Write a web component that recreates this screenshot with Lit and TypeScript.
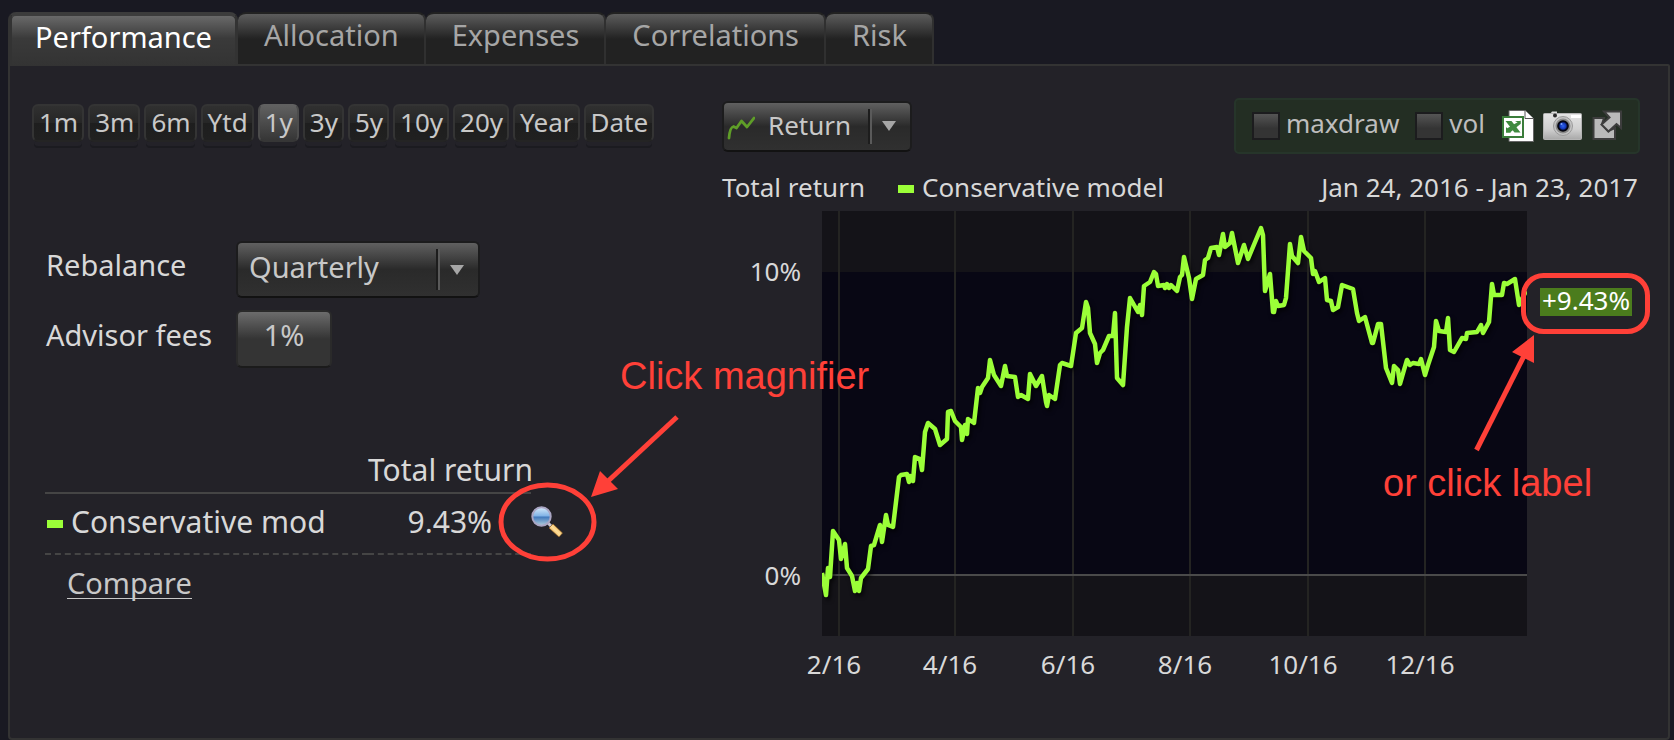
import { LitElement, html, svg, css } from "lit";
import { customElement, state, property } from "lit/decorators.js";
import { classMap } from "lit/directives/class-map.js";

const TABS = ["Performance", "Allocation", "Expenses", "Correlations", "Risk"];
const RANGES = ["1m", "3m", "6m", "Ytd", "1y", "3y", "5y", "10y", "20y", "Year", "Date"];

const TICKS = [
  { x: 117, label: "2/16" },
  { x: 233, label: "4/16" },
  { x: 351, label: "6/16" },
  { x: 468, label: "8/16" },
  { x: 586, label: "10/16" },
  { x: 703, label: "12/16" },
];

// Daily total return of the model, in chart units.
const SERIES =
  "822,573 826,595 828,568 830,577 833,531 839,540 841,559 845,544 847,568 852,576 855,591 857,583 859,591 861,578 868,569 " +
  "871,546 874,545 880,525 882,542 886,515 888,525 893,527 899,477 901,475 907,474 909,482 910,476 913,481 915,457 920,459 " +
  "922,470 925,432 928,423 935,429 940,445 947,439 948,412 951,411 955,421 961,427 962,440 965,425 967,434 968,419 974,423 " +
  "978,388 980,393 982,387 988,378 990,360 994,375 1001,386 1005,366 1007,376 1015,377 1018,397 1021,395 1028,399 1030,374 " +
  "1036,386 1042,376 1046,402 1047,406 1049,395 1055,399 1060,365 1062,363 1071,366 1073,353 1076,333 1082,328 1086,302 " +
  "1088,308 1090,333 1095,344 1097,363 1100,353 1103,350 1109,336 1113,336 1115,313 1117,378 1123,385 1127,327 1130,298 " +
  "1138,312 1140,305 1142,315 1144,286 1150,282 1154,272 1156,274 1158,286 1164,285 1165,288 1167,284 1169,288 1171,285 " +
  "1177,291 1180,277 1182,275 1184,257 1189,278 1192,299 1196,279 1203,275 1205,260 1208,258 1211,248 1217,247 1219,255 " +
  "1223,234 1225,247 1230,243 1232,233 1238,263 1244,245 1248,259 1253,247 1261,228 1263,235 1265,291 1270,274 1273,312 " +
  "1274,312 1276,301 1278,306 1284,305 1286,298 1290,244 1292,256 1298,263 1301,237 1304,251 1311,258 1313,274 1315,271 " +
  "1319,282 1325,278 1327,300 1331,301 1333,310 1338,307 1342,285 1353,289 1357,313 1359,321 1365,317 1372,343 1373,343 " +
  "1378,324 1381,324 1386,368 1392,383 1394,366 1398,370 1400,384 1404,370 1407,360 1410,365 1413,363 1419,364 1421,359 " +
  "1425,375 1428,365 1434,347 1436,321 1439,331 1446,332 1448,318 1450,350 1454,352 1462,338 1466,339 1467,333 1477,332 " +
  "1481,325 1483,333 1489,322 1492,284 1494,295 1502,295 1504,283 1507,284 1515,279 1519,305 1523,297 1526,291";

const trendIcon = svg`<svg class="trend" viewBox="0 0 28 24" width="28" height="24" aria-hidden="true">
  <path d="M2 22 C2.500 16 4 11 6.500 10.500 L9.500 12 L14.500 5 L20 11 L27 2" fill="none" stroke="#5f9e28" stroke-width="2.800" stroke-linecap="round" stroke-linejoin="round"/>
</svg>`;

const excelIcon = svg`<svg viewBox="0 0 32 32" width="32" height="32" aria-hidden="true">
  <path d="M7 0.500H23L31.500 9V31.500H7Z" fill="#fff" stroke="#666"/>
  <path d="M23 0.500V8.500H31.500" fill="#fff" stroke="#555"/>
  <rect x="1" y="7" width="20" height="20" fill="#fff" stroke="#3b7d3b" stroke-width="2"/>
  <path d="M3.500 11H9.500L18.500 22.500H12.500Z" fill="#3f8a3f"/>
  <path d="M18.500 10.500V14L8 22.500H4V19Z" fill="#3f8a3f"/>
  <path d="M13 11H18.500V14ZM4 17V22.500H9Z" fill="#3f8a3f"/>
</svg>`;

const cameraIcon = svg`<svg viewBox="0 0 39 30" width="39" height="30" aria-hidden="true">
  <defs>
    <linearGradient id="cam" x1="0" y1="0" x2="0" y2="1">
      <stop offset="0" stop-color="#e4e4e4"/><stop offset=".6" stop-color="#d0d0d0"/><stop offset="1" stop-color="#a8a8a8"/>
    </linearGradient>
    <radialGradient id="lens"><stop offset="0" stop-color="#2f66f0"/><stop offset=".5" stop-color="#1538b8"/><stop offset=".75" stop-color="#05081c"/><stop offset="1" stop-color="#000"/></radialGradient>
  </defs>
  <path d="M7 3L9 0.500H14V3Z" fill="#ddd"/>
  <rect x="0.500" y="2.500" width="38" height="26" rx="1" fill="url(#cam)" stroke="#b4b4b4"/>
  <circle cx="12" cy="4.500" r="2" fill="#2a2a2a"/>
  <rect x="28" y="4" width="10" height="3" fill="#fff"/>
  <circle cx="20" cy="15" r="9.500" fill="#c4c4c4" stroke="#9a9a9a"/>
  <circle cx="20" cy="15" r="7.500" fill="#8c8c8c"/>
  <circle cx="20" cy="15" r="5.800" fill="url(#lens)"/>
  <circle cx="18.500" cy="13" r="1" fill="#7ca8ff"/>
</svg>`;

const popoutIcon = svg`<svg viewBox="0 0 32 32" width="32" height="32" aria-hidden="true">
  <path d="M2.500 8H13L11 14L17 21L24 18V29H2.500Z" fill="#b9b9b9" stroke="#3d3d3d" stroke-width="2"/>
  <path d="M13 1.500H30V18L25.500 14L17.500 21.500L10.500 14.500L18.500 7.500Z" fill="#b9b9b9" stroke="#3d3d3d" stroke-width="2"/>
</svg>`;

const magnifierIcon = svg`<svg viewBox="0 0 32 32" width="32" height="32" aria-hidden="true">
  <defs>
    <linearGradient id="glass" x1="0" y1="0" x2="0" y2="1">
      <stop offset="0" stop-color="#d8ecfb"/><stop offset=".48" stop-color="#7fb2e6"/><stop offset=".52" stop-color="#3f78bd"/><stop offset="1" stop-color="#b4d0dc"/>
    </linearGradient>
    <linearGradient id="grip" x1="0" y1="1" x2="1" y2="0">
      <stop offset="0" stop-color="#c9760c"/><stop offset=".5" stop-color="#ffdf9a"/><stop offset="1" stop-color="#d98a12"/>
    </linearGradient>
  </defs>
  <path d="M17 17L20 20" stroke="#c9c4cf" stroke-width="3"/>
  <path d="M18 22L22 18L31.500 27L28 31Z" fill="url(#grip)" stroke="#8a5a20" stroke-width=".6"/>
  <circle cx="10.500" cy="10.500" r="9.200" fill="url(#glass)" stroke="#aaa6c4" stroke-width="2"/>
</svg>`;

@customElement("drop-down")
class DropDown extends LitElement {
  @property() value = "";
  @property() label = "";
  @property({ type: Array }) options: string[] = [];
  @property({ type: Boolean, reflect: true }) trend = false;

  static styles = css`
    :host { display: block; }
    .box {
      position: relative; display: flex; box-sizing: border-box; height: 57px;
      border: 2px solid #1c1c1d; border-bottom-color: #121212; border-radius: 6px;
      background: linear-gradient(#606060, #2a2a2a 50%, #303030);
    }
    :host([trend]) .box { height: 51px; }
    select {
      appearance: none; flex: 1; min-width: 0; border: 0; margin: 0; background: none;
      color: #c8c8c8; font: 29px/40px "Noto Sans", "Open Sans", sans-serif;
      padding: 0 48px 6px 11px; outline: none;
    }
    option { background: #2a2a2a; }
    :host([trend]) select { font-size: 26px; padding: 0 48px 2px 44px; }
    .arrow {
      position: absolute; right: 0; top: 6px; bottom: 6px; width: 42px; box-sizing: border-box; padding-right: 2px;
      border-left: 2px solid #1d1d1d; box-shadow: inset 2px 0 #5a5a5a; pointer-events: none;
      display: grid; place-items: center;
    }
    .trend { position: absolute; left: 3px; top: 13px; pointer-events: none; }
  `;

  render() {
    return html`<div class="box">
      <select aria-label=${this.label}>
        ${this.options.map((o) => html`<option ?selected=${o === this.value}>${o}</option>`)}
      </select>
      ${this.trend ? trendIcon : ""}
      <span class="arrow"><svg viewBox="0 0 14 10" width="14" height="10"><path d="M0 0H14L7 10Z" fill="#a6a6a6"/></svg></span>
    </div>`;
  }
}

@customElement("return-chart")
class ReturnChart extends LitElement {
  static styles = css`
    :host { display: block; }
    .chart { display: block; width: 100%; height: auto; overflow: visible; }
    .axis { fill: #d8d8d8; font: 26px "Noto Sans", "Open Sans", sans-serif; }
    .end { fill: #fff; }
    .line { filter: drop-shadow(2px 3px 2px rgba(0, 0, 0, 0.7)); }
  `;

  render() {
    return html`<svg class="chart" viewBox="0 0 918 490" role="img" aria-label="Total return">
      <rect x="100" y="1" width="705" height="425" fill="#141318"/>
      <rect x="100" y="62" width="705" height="303" fill="#080714"/>
      ${TICKS.map((t) => svg`<path d="M${t.x} 1V426" stroke="#242422" stroke-width="2"/>`)}
      <path d="M100 365H805" stroke="#4a4a4a" stroke-width="2"/>
      <svg x="100" y="0" width="705" height="470" viewBox="822 210 705 470">
        <polyline class="line" points=${SERIES} fill="none" stroke="#9bff38" stroke-width="4.500" stroke-linejoin="round"/>
      </svg>
      <text class="axis" x="79" y="71" text-anchor="end">10%</text>
      <text class="axis" x="79" y="375" text-anchor="end">0%</text>
      ${TICKS.map((t) => svg`<text class="axis" x=${t.x - 5} y="464" text-anchor="middle">${t.label}</text>`)}
      <a href="#details">
        <rect x="818" y="78" width="92" height="28" fill="#4b7c1d"/>
        <text class="axis end" x="864" y="100" text-anchor="middle">+9.43%</text>
      </a>
    </svg>`;
  }
}

@customElement("app-root")
class AppRoot extends LitElement {
  @state() tab = "Performance";
  @state() range = "1y";

  static styles = css`
    :host {
      display: flex; flex-direction: column; position: relative; box-sizing: border-box;
      min-height: 100vh; padding: 12px 4px 0 8px; background: #191922;
      color: #d8d8d8; font: 29px/40px "Noto Sans", "Open Sans", sans-serif;
    }
    button { font: inherit; color: inherit; margin: 0; padding: 0; border: 0; background: none; cursor: pointer; }
    .tabs { display: flex; align-items: flex-start; }
    .tab {
      box-sizing: border-box; height: 52px; padding: 0 25px 8px 26px; color: #a6a6a6;
      border: 2px solid #222; border-left: 0; border-right-color: #303030; border-bottom: 0;
      border-radius: 8px 8px 0 0; background: linear-gradient(#5c5c5c, #222 50%);
    }
    .tab.on {
      height: 54px; margin-bottom: -2px; padding: 0 23px 8px; color: #fff; position: relative;
      border: 4px solid #3a3a3a; border-bottom: 0; border-right-width: 3px; border-color: #3c3c3c #333 #333;
      background: linear-gradient(#696969, #3a3a3a 45%, #333);
    }
    .panel {
      flex: 1; display: grid; grid-template-columns: minmax(0, 690fr) minmax(0, 918fr);
      align-items: start; border: 2px solid #333; border-radius: 0 2px 4px 4px;
      padding: 32px 28px 0 22px; background: #232228;
    }
    .ranges { display: flex; gap: 4px; padding-top: 6px; }
    .range {
      box-sizing: border-box; height: 38px; padding: 0 4px 2px 5px; border: 2px solid #343434; border-bottom-color: #242424;
      border-radius: 6px; background: linear-gradient(#303030, #262626 50%, #1e1e1e 50%, #202020);
      box-shadow: 0 6px 0 -2px #232228, 0 8px 0 -2px #1b1b20;
      color: #c8c8c8; font-size: 26px; line-height: 32px;
    }
    .range.on { border-color: #606060 #4c4c4c #363636; background: linear-gradient(#606060, #363636); }
    .settings {
      display: grid; grid-template-columns: 190px 244px; row-gap: 12px; align-items: center;
      margin: 99px 0 0 14px;
    }
    .settings label, .settings .name { padding-bottom: 9px; }
    .fee {
      width: 96px; height: 58px; box-sizing: border-box; padding-bottom: 8px; color: #c8c8c8;
      border: 2px solid #2a2a2a; border-bottom-color: #1b1b1b; border-radius: 6px;
      background: linear-gradient(#6c6c6c, #343434 50%, #343434);
    }
    table { border-collapse: collapse; margin: 79px 0 0 13px; table-layout: fixed; width: 524px; font-size: 30px; }
    th, td { padding: 0; font-weight: 400; text-align: left; white-space: nowrap; }
    .c-name { width: 323px; }
    .c-value { width: 163px; }
    .head th { border-bottom: 2px solid #454545; height: 45px; line-height: 43px; text-align: right; padding-right: 4px; }
    .head td { border: 0; }
    .row th, .row td { box-sizing: border-box; height: 61px; padding-bottom: 4px; }
    .row th, .row .value { border-bottom: 2px dashed #454545; }
    .row .value { text-align: right; padding-right: 39px; }
    .row .inner { display: flex; align-items: center; gap: 8px; padding-left: 2px; }
    .chip { flex: none; width: 16px; height: 8px; background: #9bff38; }
    .inner .chip { margin-top: 4px; }
    .zoom { display: block; height: 32px; }
    .compare {
      display: inline-block; margin: 13px 0 0 35px; color: #c8c8c8; text-decoration: none;
      line-height: 30px; border-bottom: 1px solid #c8c8c8;
    }
    .bar { display: flex; justify-content: space-between; align-items: center; }
    .menu { width: 190px; }
    .tools {
      display: flex; align-items: center; box-sizing: border-box; height: 56px; padding: 0 15px 0 16px;
      border: 2px solid #26352a; border-radius: 5px; background: #232e23; color: #bdbdbd; font-size: 26px;
    }
    .tools label { display: flex; align-items: center; gap: 6px; margin-right: 16px; line-height: 36px; padding-bottom: 6px; }
    .tools input {
      appearance: none; width: 28px; height: 28px; margin: 6px 0 0; box-sizing: border-box;
      border: 2px solid #1c1c1e; background: linear-gradient(#555, #343434 60%);
    }
    .icons { display: flex; align-items: center; gap: 9px; margin-left: 1px; }
    .icons button { display: block; height: 32px; line-height: 0; }
    .legend {
      display: flex; align-items: center; box-sizing: border-box; height: 40px; margin-top: 16px;
      padding: 0 2px 6px 0; font-size: 26px; line-height: 34px;
    }
    .legend .model { display: flex; align-items: center; gap: 8px; margin-left: 33px; }
    .legend .chip { margin-top: 4px; }
    .legend .dates { margin-left: auto; }
    .notes { position: absolute; left: 0; top: 0; width: 100%; height: auto; pointer-events: none; }
    .notes text { fill: #ff4038; font: 38px "Liberation Sans", Arial, sans-serif; }
  `;

  render() {
    return html`
      <nav class="tabs" role="tablist">
        ${TABS.map((t) => html`<button role="tab" class=${classMap({ tab: true, on: t === this.tab })}
          aria-selected=${t === this.tab} @click=${() => (this.tab = t)}>${t}</button>`)}
      </nav>
      <main class="panel">
        <section>
          <div class="ranges">
            ${RANGES.map((r) => html`<button class=${classMap({ range: true, on: r === this.range })}
              @click=${() => (this.range = r)}>${r}</button>`)}
          </div>
          <div class="settings">
            <span class="name">Rebalance</span>
            <drop-down label="Rebalance" value="Quarterly" .options=${["Quarterly", "Monthly", "Yearly"]}></drop-down>
            <label for="fee">Advisor fees</label>
            <button id="fee" class="fee">1%</button>
          </div>
          <table>
            <colgroup><col class="c-name"><col class="c-value"><col></colgroup>
            <thead><tr class="head"><th></th><th>Total return</th><td></td></tr></thead>
            <tbody><tr class="row">
              <th scope="row"><span class="inner"><i class="chip"></i>Conservative mod</span></th>
              <td class="value">9.43%</td>
              <td><button class="zoom" aria-label="Details">${magnifierIcon}</button></td>
            </tr></tbody>
          </table>
          <a class="compare" href="#compare">Compare</a>
        </section>
        <section>
          <div class="bar">
            <drop-down class="menu" trend label="Chart" value="Return" .options=${["Return", "Growth"]}></drop-down>
            <div class="tools">
              <label><input type="checkbox">maxdraw</label>
              <label><input type="checkbox">vol</label>
              <div class="icons">
                <button aria-label="Export to Excel">${excelIcon}</button>
                <button aria-label="Save picture">${cameraIcon}</button>
                <button aria-label="Open in new window">${popoutIcon}</button>
              </div>
            </div>
          </div>
          <div class="legend">
            <span>Total return</span>
            <span class="model"><i class="chip"></i>Conservative model</span>
            <span class="dates">Jan 24, 2016 - Jan 23, 2017</span>
          </div>
          <return-chart></return-chart>
        </section>
      </main>
      <svg class="notes" viewBox="0 0 1674 740">
        <g fill="none" stroke="#ff4038" stroke-width="5">
          <ellipse cx="547.500" cy="522" rx="46.500" ry="37"/>
          <path d="M677 417L606 483"/>
          <rect x="1523.500" y="275.500" width="124" height="56" rx="20"/>
          <path d="M1476.500 450L1525 354"/>
        </g>
        <path d="M591 497L600 471L618 489ZM1534 335L1512 352L1534 363Z" fill="#ff4038"/>
        <text x="620" y="389">Click magnifier</text>
        <text x="1383" y="496">or click label</text>
      </svg>
    `;
  }
}
